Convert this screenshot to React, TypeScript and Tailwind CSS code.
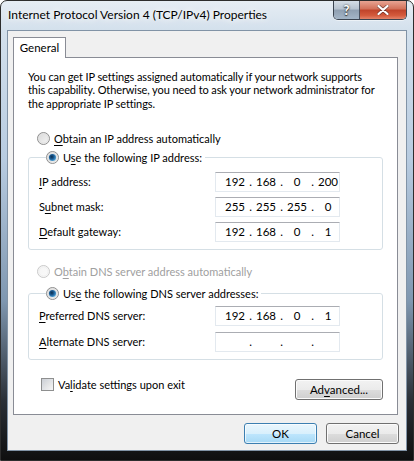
import React from "react";

const FONT = { fontFamily: 'Lato, "Noto Sans", "Liberation Sans", sans-serif' };

function Radio({ checked, disabled }: { checked?: boolean; disabled?: boolean }) {
  const id = `rg${checked ? 1 : 0}${disabled ? 1 : 0}`;
  return (
    <svg width="13" height="13" viewBox="0 0 13 13" className="shrink-0">
      <defs>
        <linearGradient id={id} x1="0" y1="0" x2="1" y2="1">
          <stop offset="0" stopColor={disabled ? "#f4f4f4" : "#d8d8d8"} />
          <stop offset="1" stopColor={disabled ? "#fbfbfb" : "#f6f6f6"} />
        </linearGradient>
        <radialGradient id="dot" cx="0.4" cy="0.4" r="0.7">
          <stop offset="0" stopColor="#0c2e4e" />
          <stop offset="0.45" stopColor="#1c5c94" />
          <stop offset="1" stopColor="#60b8ea" />
        </radialGradient>
      </defs>
      <circle cx="6.5" cy="6.5" r="6" fill={`url(#${id})`} stroke={disabled ? "#c9c9c9" : "#8f8f8f"} strokeWidth="1" />
      <circle cx="6.5" cy="6.5" r="4.6" fill="none" stroke={disabled ? "#efefef" : "#e2e2e2"} strokeWidth="1" />
      {checked && <circle cx="6.5" cy="6.5" r="3.6" fill="url(#dot)" />}
    </svg>
  );
}

function U({ children }: { children: React.ReactNode }) {
  return <span className="underline underline-offset-2">{children}</span>;
}

function IpField({ parts }: { parts: string[] }) {
  return (
    <div className="flex h-[20px] w-[125px] items-center border border-[#e3e9ef] border-t-[#abadb3] bg-white pl-[8px] text-[11.5px] leading-none text-black">
      {parts.map((p, i) => (
        <React.Fragment key={i}>
          <span className="w-[22px] text-center">{p}</span>
          {i < 3 && <span className="w-[9px] text-center">.</span>}
        </React.Fragment>
      ))}
    </div>
  );
}

function Btn({ children, def }: { children: React.ReactNode; def?: boolean }) {
  return (
    <div
      className={`flex h-[21px] items-center justify-center rounded-[3px] border text-[11.5px] text-black ${
        def
          ? "border-[#3c7fb1] bg-[linear-gradient(#eaf6fd_0%,#d9f0fc_50%,#bee6fd_51%,#a7d9f5_100%)] shadow-[inset_0_0_0_1px_#ffffffaa]"
          : "border-[#707070] bg-[linear-gradient(#f2f2f2_0%,#ebebeb_50%,#dddddd_51%,#cfcfcf_100%)] shadow-[inset_0_0_0_1px_#fbfbfb]"
      }`}
    >
      {children}
    </div>
  );
}

function Row({ label, parts }: { label: React.ReactNode; parts: string[] }) {
  return (
    <div className="grid grid-cols-[176px_125px] items-center">
      <span>{label}</span>
      <IpField parts={parts} />
    </div>
  );
}

export default function App() {
  return (
    <div
      style={FONT}
      className="relative flex h-[461px] w-[414px] flex-col overflow-hidden rounded-t-[7px] border border-[#2d2d2d] bg-[linear-gradient(to_bottom,#e6edf4_0px,#d3e0ec_30px,#b7cbe0_160px,#7f97b0_300px,#2a2f36_400px,#0e0e0e_461px)]"
    >
      {/* title bar */}
      <div className="flex h-[29px] shrink-0 items-start">
        <div className="pl-[7px] pt-[6px] text-[12px] leading-[16px] text-black [text-shadow:0_0_6px_#ffffff,0_0_10px_#ffffff]">
          Internet Protocol Version 4 (TCP/IPv4) Properties
        </div>
        <div className="ml-auto mr-[6px] flex h-[19px] overflow-hidden rounded-b-[5px] border border-t-0 border-[#3b4450] shadow-[0_1px_0_#ffffff80]">
          <div className="flex w-[26px] items-center justify-center border-r border-[#4a5260] bg-[linear-gradient(#d5dde6_0%,#b6c2cf_45%,#8f9fb1_50%,#a4b6c8_100%)] text-[13px] font-bold leading-none text-white [text-shadow:0_0_2px_#333,0_1px_1px_#333]">
            ?
          </div>
          <div className="flex w-[46px] items-center justify-center bg-[linear-gradient(#e8a493_0%,#d27058_45%,#c0432a_50%,#d45a3c_80%,#e4846a_100%)]">
            <svg width="12" height="10" viewBox="0 0 12 10">
              <path d="M1.5 1 L10.5 9 M10.5 1 L1.5 9" stroke="#3a2020" strokeWidth="3.6" strokeLinecap="round" opacity="0.55" />
              <path d="M1.5 1 L10.5 9 M10.5 1 L1.5 9" stroke="#ffffff" strokeWidth="2.2" strokeLinecap="round" />
            </svg>
          </div>
        </div>
      </div>

      {/* client */}
      <div className="mx-[6px] mb-[9px] flex flex-1 flex-col border border-[#8193a6] bg-[#f0f0f0] px-[5px] pb-[6px] pt-[6px]">
        {/* tab strip */}
        <div className="flex h-[20px] items-end">
          <div className="relative z-10 -mb-px flex h-[21px] w-[53px] items-center justify-center border border-b-0 border-[#898c95] bg-white text-[11.5px] text-black">
            General
          </div>
        </div>
        {/* tab panel */}
        <div className="flex h-[358px] w-[385px] flex-col border border-[#898c95] bg-white px-[14px] pt-[12px] text-[11px] text-black">
          <p className="w-[348px] leading-[13.3px] tracking-[-0.1px]">
            You can get IP settings assigned automatically if your network supports this capability. Otherwise, you need to ask your network administrator for the appropriate IP settings.
          </p>

          <div className="mt-[22px] flex items-center gap-[4px] pl-[9px] leading-[14px]">
            <Radio />
            <span>
              <U>O</U>btain an IP address automatically
            </span>
          </div>

          <fieldset className="mt-[5px] rounded-[3px] border border-[#d5dfe5] px-[10px] pb-[7px]">
            <legend className="ml-[7px] flex items-center gap-[4px] pr-[3px] leading-[14px]">
              <Radio checked />
              <span>
                U<U>s</U>e the following IP address:
              </span>
            </legend>
            <div className="mt-[7px] flex flex-col gap-[5px]">
              <Row label={<><U>I</U>P address:</>} parts={["192", "168", "0", "200"]} />
              <Row label={<>S<U>u</U>bnet mask:</>} parts={["255", "255", "255", "0"]} />
              <Row label={<><U>D</U>efault gateway:</>} parts={["192", "168", "0", "1"]} />
            </div>
          </fieldset>

          <div className="mt-[15px] flex items-center gap-[4px] pl-[9px] leading-[14px] text-[#a0a0a0]">
            <Radio disabled />
            <span>
              O<U>b</U>tain DNS server address automatically
            </span>
          </div>

          <fieldset className="mt-[8px] rounded-[3px] border border-[#d5dfe5] px-[10px] pb-[7px]">
            <legend className="ml-[7px] flex items-center gap-[4px] pr-[3px] leading-[14px]">
              <Radio checked />
              <span>
                Us<U>e</U> the following DNS server addresses:
              </span>
            </legend>
            <div className="mt-[5px] flex flex-col gap-[6px]">
              <Row label={<><U>P</U>referred DNS server:</>} parts={["192", "168", "0", "1"]} />
              <Row label={<><U>A</U>lternate DNS server:</>} parts={["", "", "", ""]} />
            </div>
          </fieldset>

          <div className="mt-[18px] flex items-start">
            <div className="flex items-center gap-[4px] pl-[13px] leading-[14px]">
              <div className="h-[13px] w-[13px] border border-[#8e8f8f] bg-[linear-gradient(135deg,#cbcfd5,#f6f6f6)] p-[2px]">
                <div className="h-full w-full bg-[linear-gradient(135deg,#d3d6da,#f0f0f0)]" />
              </div>
              <span>
                Va<U>l</U>idate settings upon exit
              </span>
            </div>
            <div className="ml-auto w-[88px] pt-[1px]">
              <Btn>
                <span>
                  Ad<U>v</U>anced...
                </span>
              </Btn>
            </div>
          </div>
        </div>

        {/* bottom buttons */}
        <div className="mt-[8px] flex justify-end gap-[9px] pr-[2px]">
          <div className="w-[73px]">
            <Btn def>OK</Btn>
          </div>
          <div className="w-[73px]">
            <Btn>Cancel</Btn>
          </div>
        </div>
      </div>
    </div>
  );
}
